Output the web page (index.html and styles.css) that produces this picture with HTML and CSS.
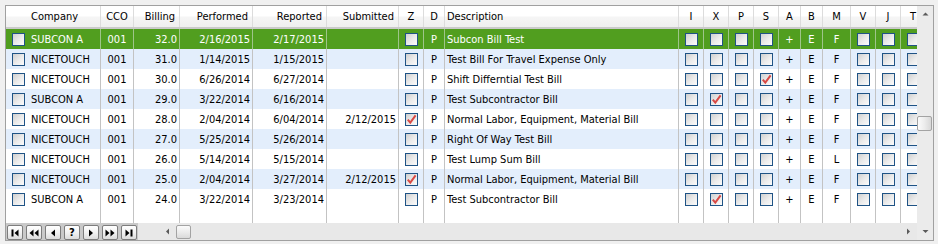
FILE: index.html
```html
<!DOCTYPE html>
<html>
<head>
<meta charset="utf-8">
<link rel="stylesheet" href="styles.css">
</head>
<body>
<div class="frame">
  <div class="main">
    <div class="viewport">
      <div class="row hdr">
        <div class="cell hco">Company</div><div class="cell c">CCO</div><div class="cell hr">Billing</div><div class="cell hr">Performed</div><div class="cell hr">Reported</div><div class="cell hr">Submitted</div><div class="cell c">Z</div><div class="cell c">D</div><div class="cell l">Description</div><div class="cell c">I</div><div class="cell c">X</div><div class="cell c">P</div><div class="cell c">S</div><div class="cell c">A</div><div class="cell c">B</div><div class="cell c">M</div><div class="cell c">V</div><div class="cell c">J</div><div class="cell c">T</div>
      </div>

      <div class="row sel">
        <div class="cell co"><span class="cb"></span>SUBCON A</div><div class="cell c">001</div><div class="cell r">32.0</div><div class="cell r">2/16/2015</div><div class="cell r">2/17/2015</div><div class="cell r"></div><div class="cell c"><span class="cb"></span></div><div class="cell c">P</div><div class="cell l">Subcon Bill Test</div><div class="cell c"><span class="cb"></span></div><div class="cell c"><span class="cb"></span></div><div class="cell c"><span class="cb"></span></div><div class="cell c"><span class="cb"></span></div><div class="cell c">+</div><div class="cell c">E</div><div class="cell c">F</div><div class="cell c"><span class="cb"></span></div><div class="cell c"><span class="cb"></span></div><div class="cell c"><span class="cb"></span></div>
      </div>

      <div class="row alt">
        <div class="cell co"><span class="cb"></span>NICETOUCH</div><div class="cell c">001</div><div class="cell r">31.0</div><div class="cell r">1/14/2015</div><div class="cell r">1/15/2015</div><div class="cell r"></div><div class="cell c"><span class="cb"></span></div><div class="cell c">P</div><div class="cell l">Test Bill For Travel Expense Only</div><div class="cell c"><span class="cb"></span></div><div class="cell c"><span class="cb"></span></div><div class="cell c"><span class="cb"></span></div><div class="cell c"><span class="cb"></span></div><div class="cell c">+</div><div class="cell c">E</div><div class="cell c">F</div><div class="cell c"><span class="cb"></span></div><div class="cell c"><span class="cb"></span></div><div class="cell c"><span class="cb"></span></div>
      </div>

      <div class="row">
        <div class="cell co"><span class="cb"></span>NICETOUCH</div><div class="cell c">001</div><div class="cell r">30.0</div><div class="cell r">6/26/2014</div><div class="cell r">6/27/2014</div><div class="cell r"></div><div class="cell c"><span class="cb"></span></div><div class="cell c">P</div><div class="cell l">Shift Differntial Test Bill</div><div class="cell c"><span class="cb"></span></div><div class="cell c"><span class="cb"></span></div><div class="cell c"><span class="cb"></span></div><div class="cell c"><span class="cb"><svg class="tick" viewBox="0 0 11 11"><path d="M1.8 5.6 L4.3 8.6 L9.6 1.4"/></svg></span></div><div class="cell c">+</div><div class="cell c">E</div><div class="cell c">F</div><div class="cell c"><span class="cb"></span></div><div class="cell c"><span class="cb"></span></div><div class="cell c"><span class="cb"></span></div>
      </div>

      <div class="row alt">
        <div class="cell co"><span class="cb"></span>SUBCON A</div><div class="cell c">001</div><div class="cell r">29.0</div><div class="cell r">3/22/2014</div><div class="cell r">6/16/2014</div><div class="cell r"></div><div class="cell c"><span class="cb"></span></div><div class="cell c">P</div><div class="cell l">Test Subcontractor Bill</div><div class="cell c"><span class="cb"></span></div><div class="cell c"><span class="cb"><svg class="tick" viewBox="0 0 11 11"><path d="M1.8 5.6 L4.3 8.6 L9.6 1.4"/></svg></span></div><div class="cell c"><span class="cb"></span></div><div class="cell c"><span class="cb"></span></div><div class="cell c">+</div><div class="cell c">E</div><div class="cell c">F</div><div class="cell c"><span class="cb"></span></div><div class="cell c"><span class="cb"></span></div><div class="cell c"><span class="cb"></span></div>
      </div>

      <div class="row">
        <div class="cell co"><span class="cb"></span>NICETOUCH</div><div class="cell c">001</div><div class="cell r">28.0</div><div class="cell r">2/04/2014</div><div class="cell r">6/04/2014</div><div class="cell r">2/12/2015</div><div class="cell c"><span class="cb"><svg class="tick" viewBox="0 0 11 11"><path d="M1.8 5.6 L4.3 8.6 L9.6 1.4"/></svg></span></div><div class="cell c">P</div><div class="cell l">Normal Labor, Equipment, Material Bill</div><div class="cell c"><span class="cb"></span></div><div class="cell c"><span class="cb"></span></div><div class="cell c"><span class="cb"></span></div><div class="cell c"><span class="cb"></span></div><div class="cell c">+</div><div class="cell c">E</div><div class="cell c">F</div><div class="cell c"><span class="cb"></span></div><div class="cell c"><span class="cb"></span></div><div class="cell c"><span class="cb"></span></div>
      </div>

      <div class="row alt">
        <div class="cell co"><span class="cb"></span>NICETOUCH</div><div class="cell c">001</div><div class="cell r">27.0</div><div class="cell r">5/25/2014</div><div class="cell r">5/26/2014</div><div class="cell r"></div><div class="cell c"><span class="cb"></span></div><div class="cell c">P</div><div class="cell l">Right Of Way Test Bill</div><div class="cell c"><span class="cb"></span></div><div class="cell c"><span class="cb"></span></div><div class="cell c"><span class="cb"></span></div><div class="cell c"><span class="cb"></span></div><div class="cell c">+</div><div class="cell c">E</div><div class="cell c">F</div><div class="cell c"><span class="cb"></span></div><div class="cell c"><span class="cb"></span></div><div class="cell c"><span class="cb"></span></div>
      </div>

      <div class="row">
        <div class="cell co"><span class="cb"></span>NICETOUCH</div><div class="cell c">001</div><div class="cell r">26.0</div><div class="cell r">5/14/2014</div><div class="cell r">5/15/2014</div><div class="cell r"></div><div class="cell c"><span class="cb"></span></div><div class="cell c">P</div><div class="cell l">Test Lump Sum Bill</div><div class="cell c"><span class="cb"></span></div><div class="cell c"><span class="cb"></span></div><div class="cell c"><span class="cb"></span></div><div class="cell c"><span class="cb"></span></div><div class="cell c">+</div><div class="cell c">E</div><div class="cell c">L</div><div class="cell c"><span class="cb"></span></div><div class="cell c"><span class="cb"></span></div><div class="cell c"><span class="cb"></span></div>
      </div>

      <div class="row alt">
        <div class="cell co"><span class="cb"></span>NICETOUCH</div><div class="cell c">001</div><div class="cell r">25.0</div><div class="cell r">2/04/2014</div><div class="cell r">3/27/2014</div><div class="cell r">2/12/2015</div><div class="cell c"><span class="cb"><svg class="tick" viewBox="0 0 11 11"><path d="M1.8 5.6 L4.3 8.6 L9.6 1.4"/></svg></span></div><div class="cell c">P</div><div class="cell l">Normal Labor, Equipment, Material Bill</div><div class="cell c"><span class="cb"></span></div><div class="cell c"><span class="cb"></span></div><div class="cell c"><span class="cb"></span></div><div class="cell c"><span class="cb"></span></div><div class="cell c">+</div><div class="cell c">E</div><div class="cell c">F</div><div class="cell c"><span class="cb"></span></div><div class="cell c"><span class="cb"></span></div><div class="cell c"><span class="cb"></span></div>
      </div>

      <div class="row">
        <div class="cell co"><span class="cb"></span>SUBCON A</div><div class="cell c">001</div><div class="cell r">24.0</div><div class="cell r">3/22/2014</div><div class="cell r">3/23/2014</div><div class="cell r"></div><div class="cell c"><span class="cb"></span></div><div class="cell c">P</div><div class="cell l">Test Subcontractor Bill</div><div class="cell c"><span class="cb"></span></div><div class="cell c"><span class="cb"><svg class="tick" viewBox="0 0 11 11"><path d="M1.8 5.6 L4.3 8.6 L9.6 1.4"/></svg></span></div><div class="cell c"><span class="cb"></span></div><div class="cell c"><span class="cb"></span></div><div class="cell c">+</div><div class="cell c">E</div><div class="cell c">F</div><div class="cell c"><span class="cb"></span></div><div class="cell c"><span class="cb"></span></div><div class="cell c"><span class="cb"></span></div>
      </div>

      <div class="row filler">
        <div class="cell"></div><div class="cell"></div><div class="cell"></div><div class="cell"></div><div class="cell"></div><div class="cell"></div><div class="cell"></div><div class="cell"></div><div class="cell"></div><div class="cell"></div><div class="cell"></div><div class="cell"></div><div class="cell"></div><div class="cell"></div><div class="cell"></div><div class="cell"></div><div class="cell"></div><div class="cell"></div><div class="cell"></div>
      </div>
    </div>

    <div class="hbar">
      <div class="nav">
        <span class="nbtn"><svg viewBox="0 0 14 12"><rect x="3.5" y="2.5" width="2" height="7"/><polygon points="10.5,2.5 10.5,9.5 6.5,6"/></svg></span>
        <span class="nbtn"><svg viewBox="0 0 14 12"><polygon points="6.5,2.5 6.5,9.5 2.5,6"/><polygon points="11.5,2.5 11.5,9.5 7.5,6"/></svg></span>
        <span class="nbtn"><svg viewBox="0 0 14 12"><polygon points="9,2.5 9,9.5 5,6"/></svg></span>
        <span class="nbtn q">?</span>
        <span class="nbtn"><svg viewBox="0 0 14 12"><polygon points="5,2.5 5,9.5 9,6"/></svg></span>
        <span class="nbtn"><svg viewBox="0 0 14 12"><polygon points="2.5,2.5 2.5,9.5 6.5,6"/><polygon points="7.5,2.5 7.5,9.5 11.5,6"/></svg></span>
        <span class="nbtn"><svg viewBox="0 0 14 12"><polygon points="3.5,2.5 3.5,9.5 7.5,6"/><rect x="8.5" y="2.5" width="2" height="7"/></svg></span>
      </div>
      <div class="hscroll">
        <span class="arrow-btn"><svg viewBox="0 0 17 17"><polygon points="10,5.5 10,11.5 7,8.5"/></svg></span>
        <span class="hthumb"></span>
        <span class="htrack"></span>
        <span class="arrow-btn"><svg viewBox="0 0 17 17"><polygon points="7,5.5 7,11.5 10,8.5"/></svg></span>
      </div>
    </div>
  </div>

  <div class="vbar">
    <span class="varrow"><svg viewBox="0 0 16 17"><polygon points="5.5,9.5 11.5,9.5 8.5,6.5"/></svg></span>
    <div class="vtrack"><span class="vthumb"></span></div>
    <span class="varrow"><svg viewBox="0 0 16 17"><polygon points="5.5,7 11.5,7 8.5,10"/></svg></span>
  </div>
</div>
</body>
</html>
```

FILE: styles.css
```css
body {
  margin: 0;
  background: #f0f0f0;
  font-family: "DejaVu Sans Condensed", "DejaVu Sans", sans-serif;
  font-size: 11px;
  color: #000;
}

.frame {
  margin: 5px 0 0 5px;
  width: 929px;
  height: 236px;
  box-sizing: border-box;
  border: 1px solid #a0a0a0;
  display: flex;
  background: #fff;
}

.main {
  width: 911px;
  display: flex;
  flex-direction: column;
}

.viewport {
  height: 217px;
  overflow: hidden;
  display: flex;
  flex-direction: column;
  background: #fff;
}

.row {
  display: grid;
  grid-template-columns: 95px 33px 46px 73px 74px 72px 25px 21px 234px 25px 25px 25px 25px 22px 22px 28px 25px 25px 25px;
  width: 920px;
  height: 20px;
  flex: none;
}

.row.alt { background: #e3eefc; }
.row.sel { background: #519e1f; color: #fff; }
.row.sel .cell { border-right-color: #9fc58a; }

.row.filler { flex: 1; height: auto; }

.cell {
  border-right: 1px solid #c3c3c3;
  display: flex;
  align-items: center;
  overflow: hidden;
  white-space: nowrap;
  box-sizing: border-box;
}

.l { padding-left: 2px; }
.r { justify-content: flex-end; padding-right: 2px; }
.c { justify-content: center; }
.co { padding-left: 6px; gap: 6px; }

.hdr {
  height: 21px;
  border-bottom: 2px solid #cacaca;
  background: linear-gradient(to bottom, #ffffff 0%, #ffffff 45%, #f5f5f5 55%, #efefef 100%);
}
.hdr .cell { border-right-color: #dcdcdc; }
.hdr .hco { padding-left: 25px; }
.hdr .hr { justify-content: flex-end; padding-right: 4px; }
.hdr .l { padding-left: 2px; }

.cb {
  width: 13px;
  height: 13px;
  box-sizing: border-box;
  border: 1px solid #1f5385;
  background: linear-gradient(135deg, #d0d0d0 0%, #ececec 55%, #fbfbfb 100%);
  display: flex;
  align-items: center;
  justify-content: center;
  flex: none;
}

.tick {
  width: 11px;
  height: 11px;
  display: block;
}
.tick path {
  fill: none;
  stroke: #d94a45;
  stroke-width: 2;
}

.hbar {
  height: 17px;
  display: flex;
  background: #e8e8e8;
}

.nav {
  width: 132px;
  background: #c9c9c9;
  display: flex;
  gap: 3px;
  padding: 2px 0 0 1px;
  box-sizing: border-box;
}

.nbtn {
  width: 16px;
  height: 15px;
  box-sizing: border-box;
  border: 1px solid #7d7d7d;
  border-radius: 2px;
  background: linear-gradient(to bottom, #ffffff 0%, #f2f2f2 50%, #dcdcdc 100%);
  display: flex;
  align-items: center;
  justify-content: center;
}
.nbtn svg { width: 14px; height: 12px; display: block; }
.nbtn svg * { fill: #000; }
.nbtn.q { font-weight: bold; font-size: 10px; font-family: "DejaVu Sans", sans-serif; }

.hscroll {
  flex: 1;
  display: flex;
  align-items: center;
  background: #e8e8e8;
  padding-left: 21px;
}

.arrow-btn { width: 17px; height: 17px; flex: none; }
.arrow-btn svg { width: 17px; height: 17px; display: block; }
.arrow-btn svg polygon, .varrow svg polygon { fill: #5a5a5a; }

.hthumb {
  width: 15px;
  height: 14px;
  box-sizing: border-box;
  border: 1px solid #a3a3a3;
  border-radius: 2px;
  background: linear-gradient(to bottom, #fbfbfb 0%, #ececec 50%, #dadada 100%);
  flex: none;
}

.htrack { flex: 1; }

.vbar {
  width: 16px;
  display: flex;
  flex-direction: column;
  background: #ebebeb;
}

.varrow { height: 17px; flex: none; }
.varrow svg { width: 16px; height: 17px; display: block; }

.vtrack {
  flex: 1;
  padding-top: 93px;
}

.vthumb {
  display: block;
  width: 15px;
  height: 15px;
  box-sizing: border-box;
  border: 1px solid #a3a3a3;
  border-radius: 2px;
  background: linear-gradient(to right, #fbfbfb 0%, #ececec 50%, #d8d8d8 100%);
}
```
